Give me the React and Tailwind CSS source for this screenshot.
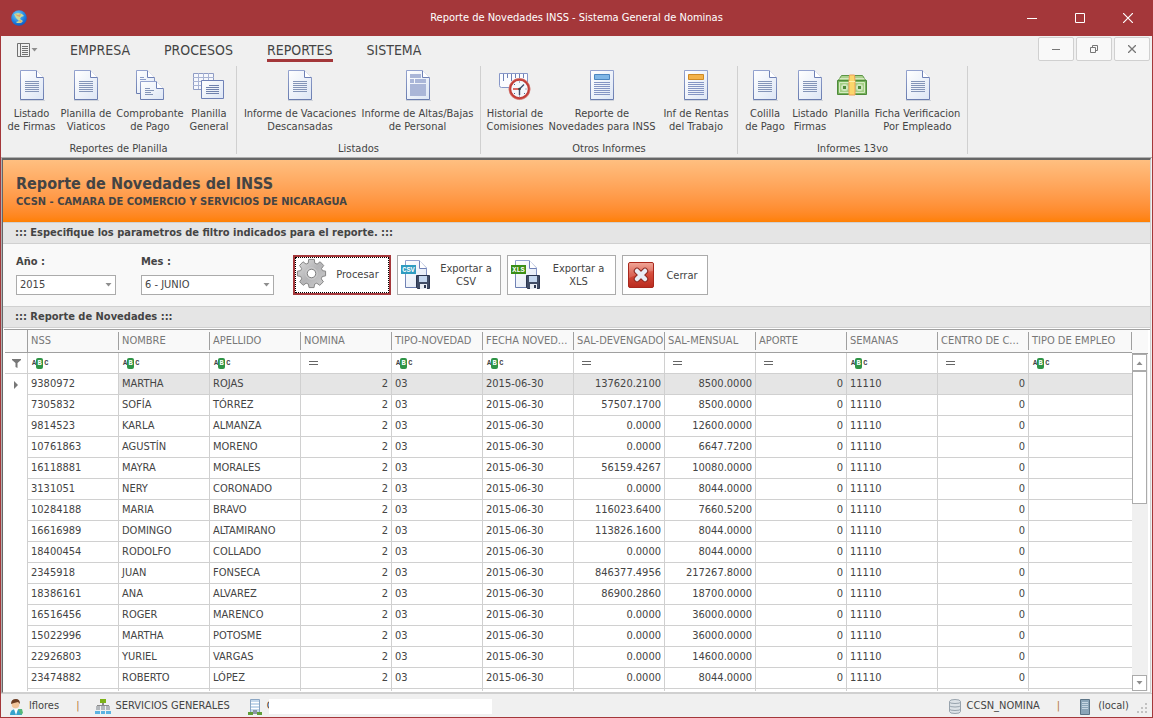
import React from "react";

const rows = [
  ["9380972", "MARTHA", "ROJAS", "137620.2100", "8500.0000"],
  ["7305832", "SOFÍA", "TÓRREZ", "57507.1700", "8500.0000"],
  ["9814523", "KARLA", "ALMANZA", "0.0000", "12600.0000"],
  ["10761863", "AGUSTÍN", "MORENO", "0.0000", "6647.7200"],
  ["16118881", "MAYRA", "MORALES", "56159.4267", "10080.0000"],
  ["3131051", "NERY", "CORONADO", "0.0000", "8044.0000"],
  ["10284188", "MARIA", "BRAVO", "116023.6400", "7660.5200"],
  ["16616989", "DOMINGO", "ALTAMIRANO", "113826.1600", "8044.0000"],
  ["18400454", "RODOLFO", "COLLADO", "0.0000", "8044.0000"],
  ["2345918", "JUAN", "FONSECA", "846377.4956", "217267.8000"],
  ["18386161", "ANA", "ALVAREZ", "86900.2860", "18700.0000"],
  ["16516456", "ROGER", "MARENCO", "0.0000", "36000.0000"],
  ["15022996", "MARTHA", "POTOSME", "0.0000", "36000.0000"],
  ["22926803", "YURIEL", "VARGAS", "0.0000", "14600.0000"],
  ["23474882", "ROBERTO", "LÓPEZ", "0.0000", "8044.0000"],
];

const columns = [
  { name: "NSS", kind: "text" },
  { name: "NOMBRE", kind: "text" },
  { name: "APELLIDO", kind: "text" },
  { name: "NOMINA", kind: "number" },
  { name: "TIPO-NOVEDAD", kind: "text" },
  { name: "FECHA NOVED...", kind: "text" },
  { name: "SAL-DEVENGADO", kind: "number" },
  { name: "SAL-MENSUAL", kind: "number" },
  { name: "APORTE", kind: "number" },
  { name: "SEMANAS", kind: "text" },
  { name: "CENTRO DE C...", kind: "number" },
  { name: "TIPO DE EMPLEO", kind: "text" },
];

/* ---------- icons ---------- */

function IconDefs() {
  return (
    <svg className="absolute h-0 w-0" aria-hidden="true">
      <defs>
        <linearGradient id="paper" x1="0" y1="0" x2="1" y2="1">
          <stop offset="0" stopColor="#ffffff" />
          <stop offset="1" stopColor="#dde6f5" />
        </linearGradient>
        <linearGradient id="edge" x1="0" y1="0" x2="0" y2="1">
          <stop offset="0" stopColor="#94a3cf" />
          <stop offset="1" stopColor="#6a7db0" />
        </linearGradient>
        <linearGradient id="steel" x1="0" y1="0" x2="1" y2="1">
          <stop offset="0" stopColor="#dcdcdc" />
          <stop offset="0.5" stopColor="#b4b4b6" />
          <stop offset="1" stopColor="#cfcfcf" />
        </linearGradient>
        <linearGradient id="danger" x1="0" y1="0" x2="0" y2="1">
          <stop offset="0" stopColor="#ee9585" />
          <stop offset="0.45" stopColor="#d64d3c" />
          <stop offset="1" stopColor="#b92b1f" />
        </linearGradient>
        <radialGradient id="globe" cx="0.4" cy="0.3" r="0.8">
          <stop offset="0" stopColor="#6fd4fb" />
          <stop offset="0.6" stopColor="#1f7fe0" />
          <stop offset="1" stopColor="#0b4db8" />
        </radialGradient>
      </defs>
    </svg>
  );
}

function Icon32({ children }) {
  return (
    <svg width="32" height="32" viewBox="0 0 32 32" aria-hidden="true" className="block shrink-0">
      {children}
    </svg>
  );
}

function Sheet() {
  return (
    <>
      <path d="M4 31.500h25" stroke="#cfd3da" />
      <path d="M4.500 1.500H20L27.500 9V30.500H4.500Z" fill="url(#paper)" stroke="url(#edge)" />
      <path d="M20.500 1.500V8.500H27.500" fill="#fff" stroke="#6f81b6" />
    </>
  );
}

function DocIcon() {
  return (
    <Icon32>
      <Sheet />
      <path d="M9 12.500h14M9 14.500h14M9 16.500h14M9 18.500h14M9 20.500h14M9 22.500h14" stroke="#8495b8" />
    </Icon32>
  );
}

function LayoutDocIcon() {
  return (
    <Icon32>
      <Sheet />
      <path d="M8 5h11v4H8zM8 10h4v4H8zM13 10h11v4H13zM8 15h16v12H8z" fill="#aab6d8" />
    </Icon32>
  );
}

function CopyDocsIcon() {
  return (
    <Icon32>
      <path d="M2.500 1.500H13L20.500 9V24.500H2.500Z" fill="url(#paper)" stroke="url(#edge)" />
      <path d="M13.500 1.500V8.500H20.500" fill="#fff" stroke="#6f81b6" />
      <path d="M6 8.500h4M6 10.500h6" stroke="#8a9cc8" />
      <path d="M6.500 12.500H22L29.500 20V30.500H6.500Z" fill="url(#paper)" stroke="url(#edge)" />
      <path d="M22.500 12.500V19.500H29.500" fill="#fff" stroke="#6f81b6" />
      <path d="M11 19.500h5M11 21.500h9M11 23.500h6M11 25.500h8" stroke="#8495b8" />
    </Icon32>
  );
}

function TableDocIcon() {
  return (
    <Icon32>
      <path d="M.5 4.500h20v16H.5z" fill="#f6f8fd" stroke="#8f9cc4" />
      <path d="M5.500 4v16M10.500 4v16M15.500 4v16M0 8.500h21M0 12.500h21M0 16.500h21" stroke="#a9b4d4" />
      <path d="M8.500 11.500h22v18h-22z" fill="url(#paper)" stroke="#6f81b6" />
      <path d="M16 16.500h10M13 18.500h13M13 20.500h13M13 22.500h13M13 24.500h13" stroke="#7082ad" />
    </Icon32>
  );
}

function ClockIcon() {
  return (
    <Icon32>
      <path d="M.5 4.500h28v12q0 2-2 2H2.500q-2 0-2-2z" fill="#fbfcff" stroke="#8797c8" />
      <path d="M4.500 5v7M8.500 5v4M12.500 5v7M16.500 5v4M20.500 5v4M24.500 5v4" stroke="#6f81b6" />
      <circle cx="20.500" cy="20" r="9.500" fill="#f4f8fc" stroke="#c23f38" strokeWidth="2.500" />
      <circle cx="20.500" cy="20" r="10.600" fill="none" stroke="#dc8a84" strokeWidth=".6" />
      <path d="M20.500 12.500v1M20.500 26.500v1M27.500 20h-1M15 15l1 1M26 25l-1-1M15 25l1-1" stroke="#54648c" />
      <path d="M20.500 20V26M20.500 20L25 15.500" stroke="#41506f" strokeWidth="1.400" />
      <path d="M20.500 20H14" stroke="#cf3d35" strokeWidth="1.500" />
      <circle cx="20.500" cy="20" r="1.300" fill="#344" />
    </Icon32>
  );
}

function HeadedDocIcon({ fill, edge }) {
  return (
    <Icon32>
      <path d="M4 31.500h24" stroke="#cfd3da" />
      <path d="M4.500 1.500h23v29h-23z" fill="url(#paper)" stroke="url(#edge)" />
      <path d="M8.500 5.500h15v5h-15z" fill={fill} stroke={edge} />
      <path d="M8 13.500h16M8 15.500h16M8 17.500h16M8 19.500h16M8 21.500h16M8 23.500h16M8 25.500h16" stroke="#8495c4" />
    </Icon32>
  );
}

function MoneyIcon() {
  return (
    <Icon32>
      <path d="M5.500 6.500h21l4 6H1.500z" fill="#a9d08b" stroke="#5c9546" />
      <path d="M3.500 9.500h25" stroke="#d3e8c0" />
      <path d="M1.500 11.500h29v14h-29z" fill="#77b25c" stroke="#4f8b3b" />
      <path d="M3.500 13.500h25v10h-25z" fill="#a5cf87" stroke="#d5ebc2" />
      <circle cx="8.500" cy="18.500" r="3.500" fill="#cfe6bd" />
      <circle cx="23.500" cy="18.500" r="3.500" fill="#cfe6bd" />
      <path d="M7 17h3v3H7zM22 17h3v3h-3z" fill="#4d8a38" />
      <path d="M13.500 6h5l.5 6v14h-6V12z" fill="#fbd66b" stroke="#ef9f5a" />
      <path d="M13 12.500h6" stroke="#fff0a8" />
    </Icon32>
  );
}

function GearIcon() {
  return (
    <svg width="31" height="31" viewBox="0 0 32 33" aria-hidden="true" className="block shrink-0">
      <path
        d="M13 1.500h6l.5 4 2.500 1 3.200-2.500 3.800 4-2.300 3.200 1 2.300 3.300.5v5l-3.600.7-1 2.500 2.300 3.100-3.900 3.800-3.200-2.300-2.300 1-.6 3.700h-5.300l-.7-3.700-2.400-1-3.200 2.300-3.700-3.800 2.200-3.100-1-2.500-3.600-.7v-5l3.500-.5 1-2.300L3.300 8 7 4l3.200 2.500 2.300-1z"
        fill="url(#steel)"
        stroke="#808080"
        strokeLinejoin="round"
      />
      <circle cx="16" cy="16.500" r="6" fill="none" stroke="#cfcfcf" />
      <circle cx="16" cy="16.500" r="4.500" fill="#fff" stroke="#7b7b7b" />
    </svg>
  );
}

function ExportIcon({ label, color }) {
  return (
    <Icon32>
      <path d="M5.500 1.500H19L26.500 9V28.500H5.500Z" fill="url(#paper)" stroke="url(#edge)" />
      <path d="M19.500 1.500V9.500H26.500" fill="#fff" stroke="#6f81b6" />
      <path d="M16.500 16.500h13v13h-12l-1-1z" fill="#3f4c66" stroke="#2b3650" />
      <path d="M19 17h8v6h-8z" fill="#c3d6ee" />
      <path d="M20 25h7v5h-7z" fill="#e8edf5" />
      <path d="M24 26h2v3h-2z" fill="#2b3650" />
      <path d="M1 6h15v9H1z" fill={color} />
      <text x="8.500" y="13" textAnchor="middle" fontSize="7" fontWeight="700" fill="#fff" fontFamily="Liberation Mono, monospace">
        {label}
      </text>
    </Icon32>
  );
}

function CloseBadgeIcon() {
  return (
    <Icon32>
      <rect x="3.500" y="3.500" width="25" height="25" rx="1.500" fill="url(#danger)" stroke="#a8281d" />
      <path d="M4 4h24v8Q16 13 4 19z" fill="#fff" opacity=".16" />
      <path d="M12 12l8 8M20 12l-8 8" stroke="#8d2a22" strokeWidth="6.500" strokeLinecap="round" />
      <path d="M12 12l8 8M20 12l-8 8" stroke="#e9edf5" strokeWidth="4.500" strokeLinecap="round" />
    </Icon32>
  );
}

function Caret({ up = false }) {
  return (
    <svg width="7" height="4" viewBox="0 0 7 4" aria-hidden="true" className="block">
      <path d={up ? "M.5 4L3.500 .5L6.500 4Z" : "M.5 0H6.500L3.500 3.500Z"} fill="#8e8e8e" />
    </svg>
  );
}

/* ---------- ribbon ---------- */

const headed = {
  blue: <HeadedDocIcon fill="#7fb6e6" edge="#4c86c0" />,
  orange: <HeadedDocIcon fill="#f3b24a" edge="#cf8a24" />,
};

const ribbon = [
  {
    title: "Reportes de Planilla",
    items: [
      { icon: <DocIcon />, lines: ["Listado", "de Firmas"], width: "w-[53px]" },
      { icon: <DocIcon />, lines: ["Planilla de", "Viaticos"], width: "w-14" },
      { icon: <CopyDocsIcon />, lines: ["Comprobante", "de Pago"], width: "w-18" },
      { icon: <TableDocIcon />, lines: ["Planilla", "General"], width: "w-[46px]" },
    ],
  },
  {
    title: "Listados",
    items: [
      { icon: <DocIcon />, lines: ["Informe de Vacaciones", "Descansadas"], width: "w-[118px]" },
      { icon: <LayoutDocIcon />, lines: ["Informe de Altas/Bajas", "de Personal"], width: "w-[117px]" },
    ],
  },
  {
    title: "Otros Informes",
    items: [
      { icon: <ClockIcon />, lines: ["Historial de", "Comisiones"], width: "w-15" },
      { icon: headed.blue, lines: ["Reporte de", "Novedades para INSS"], width: "w-[114px]" },
      { icon: headed.orange, lines: ["Inf de Rentas", "del Trabajo"], width: "w-[74px]" },
    ],
  },
  {
    title: "Informes 13vo",
    items: [
      { icon: <DocIcon />, lines: ["Colilla", "de Pago"], width: "w-[46px]" },
      { icon: <DocIcon />, lines: ["Listado", "Firmas"], width: "w-11" },
      { icon: <MoneyIcon />, lines: ["Planilla"], width: "w-10" },
      { icon: <DocIcon />, lines: ["Ficha Verificacion", "Por Empleado"], width: "w-[91px]" },
    ],
  },
];

function TitleBar() {
  const button = "flex h-9 w-12 items-center justify-center";
  return (
    <header className="grid h-9 shrink-0 grid-cols-[1fr_auto_1fr] items-center bg-[#a4373a] text-white">
      <svg width="16" height="16" viewBox="0 0 16 16" className="ml-[10px]" aria-hidden="true">
        <circle cx="8" cy="8" r="7.800" fill="url(#globe)" />
        <path d="M3 4l4-1 4 1 2 2-3 1-1 2 3 2-2 2H6l-1-1 3-1-3-3z" fill="#c9d89a" />
        <path d="M4 4l3 1 3-1-1 3-3-1zM8 10l3 1-2 2z" fill="#e0a469" />
      </svg>
      <h1>Reporte de Novedades INSS - Sistema General de Nominas</h1>
      <div className="flex justify-end">
        <button type="button" aria-label="Minimizar" className={button}>
          <svg width="10" height="10" viewBox="0 0 10 10"><path d="M0 5.500h10" stroke="#fff" /></svg>
        </button>
        <button type="button" aria-label="Maximizar" className={button}>
          <svg width="10" height="10" viewBox="0 0 10 10"><path d="M.5.5h9v9h-9z" fill="none" stroke="#fff" /></svg>
        </button>
        <button type="button" aria-label="Cerrar ventana" className={button}>
          <svg width="10" height="10" viewBox="0 0 10 10"><path d="M0 0l10 10M10 0L0 10" stroke="#fff" strokeWidth="1.200" /></svg>
        </button>
      </div>
    </header>
  );
}

function RibbonTabs() {
  const child = "flex h-6 w-9 items-center justify-center rounded-xs border border-[#d0d0d0] bg-[#f9f9f9]";
  return (
    <div className="flex h-[29px] items-start">
      <button type="button" aria-label="Menú" className="ml-4 mt-[7px] flex items-center gap-px">
        <svg width="13" height="14" viewBox="0 0 13 14">
          <path d="M.5.5h12v13H.5zM3.500 0v14" fill="none" stroke="#707070" />
          <path d="M5 3.500h6M5 5.500h6M5 7.500h6M5 9.500h6M5 11.500h6" stroke="#707070" />
        </svg>
        <Caret />
      </button>
      <nav className="ml-8 flex grow gap-[34px] text-sm leading-4">
        {["EMPRESA", "PROCESOS", "REPORTES", "SISTEMA"].map((name) => (
          <a
            key={name}
            href="#"
            className={
              name === "REPORTES"
                ? "border-b-3 border-[#a4373a] pt-[6px] pb-px"
                : "border-b-3 border-transparent pt-[6px] pb-px"
            }
          >
            {name}
          </a>
        ))}
      </nav>
      <div className="mt-px mr-[2px] flex gap-[2px]">
        <button type="button" aria-label="Minimizar reporte" className={child}>
          <svg width="8" height="8" viewBox="0 0 8 8"><path d="M0 4.500h8" stroke="#777" /></svg>
        </button>
        <button type="button" aria-label="Restaurar reporte" className={child}>
          <svg width="8" height="8" viewBox="0 0 8 8"><path d="M.5 2.500h5v5h-5zM2.500 2V.5h5v5H6" fill="none" stroke="#777" /></svg>
        </button>
        <button type="button" aria-label="Cerrar reporte" className={child}>
          <svg width="8" height="8" viewBox="0 0 8 8"><path d="M0 0l8 8M8 0L0 8" stroke="#777" strokeWidth="1.300" /></svg>
        </button>
      </div>
    </div>
  );
}

function Ribbon() {
  return (
    <section className="shrink-0 border-b border-[#b0b0b0] bg-[#f0f0f0]">
      <RibbonTabs />
      <div className="flex pt-px pb-[3px]">
        {ribbon.map((group) => (
          <div key={group.title} className="flex flex-col border-r border-[#d0d0d0] px-1">
            <div className="flex h-[77px] items-start pt-[3px]">
              {group.items.map((item) => (
                <button
                  type="button"
                  key={item.lines.join(" ")}
                  className={`flex flex-col items-center gap-[6px] whitespace-nowrap leading-[13px] ${item.width}`}
                >
                  {item.icon}
                  <span>
                    {item.lines.map((line) => (
                      <span key={line} className="block">{line}</span>
                    ))}
                  </span>
                </button>
              ))}
            </div>
            <div className="text-center leading-[11px]">{group.title}</div>
          </div>
        ))}
      </div>
    </section>
  );
}

/* ---------- report ---------- */

function Picker({ id, label, value, width }) {
  return (
    <div className={width}>
      <label htmlFor={id} className="block pb-[7px] font-bold leading-[13px]">{label}</label>
      <div className="relative">
        <select
          id={id}
          defaultValue={value}
          className="block h-5 w-full appearance-none border border-[#ababab] bg-white px-[3px] leading-4 outline-none"
        >
          <option>{value}</option>
        </select>
        <span className="pointer-events-none absolute top-2 right-1"><Caret /></span>
      </div>
    </div>
  );
}

function Filters() {
  const button = "flex h-10 items-center border border-[#ababab] bg-white leading-[13px]";
  return (
    <form className="flex h-[62px] shrink-0 items-start bg-[#f9f9f9] pt-[11px] pl-[13px]">
      <div className="flex gap-[25px]">
        <Picker id="anio" label="Año :" value="2015" width="w-[100px]" />
        <Picker id="mes" label="Mes :" value="6 - JUNIO" width="w-[133px]" />
      </div>
      <div className="ml-[19px] flex gap-[6px]">
        <button type="button" className="flex h-10 w-[98px] border-2 border-[#a4373a] bg-white">
          <span className="flex h-full w-full items-start border border-dotted border-black">
            <GearIcon />
            <span className="grow self-center text-center">Procesar</span>
          </span>
        </button>
        <button type="button" className={`w-[104px] pl-[2px] ${button}`}>
          <ExportIcon label="CSV" color="#2f9cc0" />
          <span className="grow text-center">Exportar a<br />CSV</span>
        </button>
        <button type="button" className={`w-[109px] pl-[2px] ${button}`}>
          <ExportIcon label="XLS" color="#3a8f17" />
          <span className="grow text-center">Exportar a<br />XLS</span>
        </button>
        <button type="button" className={`w-[86px] pl-[2px] ${button}`}>
          <CloseBadgeIcon />
          <span className="grow text-center">Cerrar</span>
        </button>
      </div>
    </form>
  );
}

function FilterMark({ kind }) {
  if (kind === "number") {
    return (
      <svg width="9" height="4" viewBox="0 0 9 4" className="ml-[5px] block" aria-hidden="true">
        <path d="M0 .5h9M0 3.500h9" stroke="#666" />
      </svg>
    );
  }
  return (
    <span className="ml-px flex items-center font-['Liberation_Mono',monospace] text-[7px] leading-[11px] font-bold">
      <span>A</span>
      <span className="flex h-[11px] w-[7px] justify-center rounded-xs bg-[#2f9446] text-white">B</span>
      <span className="pl-px">C</span>
    </span>
  );
}

function Grid() {
  const cell = "h-[21px] truncate border-r border-b border-[#d0d0d0] p-0 px-[3px]";
  return (
    <div className="mt-px ml-px flex min-h-0 flex-1 border-t border-[#a0a0a0] pl-px">
      <div className="min-w-0 grow overflow-hidden">
        <table className="w-full table-fixed border-separate border-spacing-0 leading-4">
          <colgroup>
            <col className="w-[23px]" />
            {columns.map((column, i) => (
              <col key={column.name} className={i < columns.length - 1 ? "w-[91px]" : undefined} />
            ))}
          </colgroup>
          <thead>
            <tr className="bg-[#f9f9f9] text-left text-[#777]">
              <th aria-label="Indicador" className="h-[23px] border-r border-b border-[#a0a0a0] p-0" />
              {columns.map((column) => (
                <th key={column.name} scope="col" className="h-[23px] border-b border-[#a0a0a0] p-0 font-normal">
                  <div className="border-r border-[#a0a0a0] py-px pl-[3px] whitespace-nowrap">{column.name}</div>
                </th>
              ))}
            </tr>
            <tr>
              <td className="h-[21px] border-r border-b border-[#d0d0d0] p-0">
                <svg width="9" height="9" viewBox="0 0 9 9" className="mx-auto block" aria-hidden="true">
                  <path d="M0 0h9v1L5.500 4v5l-2-1V4L0 1z" fill="#777" />
                </svg>
              </td>
              {columns.map((column) => (
                <td key={column.name} className={`${cell} last:border-r-0`}>
                  <FilterMark kind={column.kind} />
                </td>
              ))}
            </tr>
          </thead>
          <tbody>
            {rows.map(([nss, nombre, apellido, devengado, mensual], i) => {
              const shade = i === 0 ? "bg-[#e5e5e5]" : "";
              return (
                <tr key={nss}>
                  <td className="h-[21px] border-r border-[#d0d0d0] p-0">
                    {i === 0 && (
                      <svg width="4" height="8" viewBox="0 0 4 8" className="mx-auto block" aria-hidden="true">
                        <path d="M0 0L4 4L0 8Z" fill="#777" />
                      </svg>
                    )}
                  </td>
                  <td className={cell}>{nss}</td>
                  <td className={`${cell} ${shade}`}>{nombre}</td>
                  <td className={`${cell} ${shade}`}>{apellido}</td>
                  <td className={`${cell} ${shade} text-right`}>2</td>
                  <td className={`${cell} ${shade}`}>03</td>
                  <td className={`${cell} ${shade}`}>2015-06-30</td>
                  <td className={`${cell} ${shade} text-right`}>{devengado}</td>
                  <td className={`${cell} ${shade} text-right`}>{mensual}</td>
                  <td className={`${cell} ${shade} text-right`}>0</td>
                  <td className={`${cell} ${shade}`}>11110</td>
                  <td className={`${cell} ${shade} text-right`}>0</td>
                  <td className={`${cell} ${shade} border-r-0`} />
                </tr>
              );
            })}
            <tr>
              <td className="h-[21px] border-r border-[#d0d0d0] p-0" />
              {columns.map((column) => (
                <td key={column.name} className={`${cell} last:border-r-0`} />
              ))}
            </tr>
          </tbody>
        </table>
      </div>
      <div className="flex w-4 shrink-0 flex-col bg-[#f0f0f0]">
        <div className="h-6 shrink-0 border-b border-[#a0a0a0] bg-[#f9f9f9]" />
        <button type="button" aria-label="Subir" className="flex h-[17px] w-[15px] shrink-0 items-center justify-center border border-[#ababab] bg-white">
          <Caret up />
        </button>
        <div className="h-[133px] w-[15px] shrink-0 border border-[#ababab] bg-white" />
        <div className="grow" />
        <button type="button" aria-label="Bajar" className="flex h-4 w-[15px] shrink-0 items-center justify-center border border-[#ababab] bg-white">
          <Caret />
        </button>
      </div>
      <div className="w-[2px] shrink-0 bg-white" />
    </div>
  );
}

function StatusBar() {
  return (
    <footer className="flex h-6 shrink-0 items-center border-t border-[#d0d0d0] bg-[#f0f0f0] pt-[2px]">
      <svg width="14" height="16" viewBox="0 0 14 16" className="ml-[9px]" aria-hidden="true">
        <path d="M0 16q0-6 6-6t6 6z" fill="#36a3cc" />
        <path d="M4 10l2 6 2-6z" fill="#fff" />
        <circle cx="5.500" cy="5.500" r="3.800" fill="#f2c49a" />
        <path d="M1 5q0-5 5-5 4 0 4 5L8 3 4 4z" fill="#6b3c22" />
        <path d="M8 10h4l1 4-2 2z" fill="#55b878" />
      </svg>
      <span className="ml-[5px]">lflores</span>
      <span className="ml-[17px] text-[#b5763a]">|</span>
      <svg width="16" height="16" viewBox="0 0 16 16" className="ml-4" aria-hidden="true">
        <path d="M5 0h6v4H5z" fill="#7db317" />
        <path d="M7 4h2v2H7zM2 6h12v1H2z" fill="#8a8a8a" />
        <path d="M1 7h4v4H1zM6 7h4v4H6zM11 7h4v4h-4z" fill="#b4b8bc" />
        <path d="M0 12h5v3H0zM6 12h4v3H6zM11 12h5v3h-5z" fill="#5cb3e2" />
      </svg>
      <span className="ml-1">SERVICIOS GENERALES</span>
      <svg width="14" height="16" viewBox="0 0 14 16" className="ml-[18px]" aria-hidden="true">
        <path d="M2.500.5h9v13h-9z" fill="#c5d9ec" stroke="#8ba6c3" />
        <path d="M3 3.500h8M3 6.500h8M3 9.500h8" stroke="#fff" />
        <path d="M5 11h4v4H5z" fill="#8c98a6" />
        <path d="M0 13h5v3H0zM9 13h5v3H9z" fill="#5f9c39" />
      </svg>
      <span className="ml-[5px]">C</span>
      <span className="relative -ml-[5px] h-[15px] w-[223px] bg-white" />
      <span className="grow" />
      <svg width="12" height="15" viewBox="0 0 12 15" aria-hidden="true">
        <path d="M.5 2.500v10q0 2 5.500 2t5.500-2v-10q0-2-5.500-2t-5.500 2z" fill="#dde2e7" stroke="#98a3ad" />
        <path d="M.5 3q0 1.500 5.500 1.500T11.500 3M.5 6.500q0 1.500 5.500 1.500t5.500-1.500M.5 10q0 1.500 5.500 1.500T11.500 10" fill="none" stroke="#98a3ad" />
      </svg>
      <span className="ml-[6px]">CCSN_NOMINA</span>
      <span className="ml-[17px] text-[#b5763a]">|</span>
      <svg width="10" height="16" viewBox="0 0 10 16" className="ml-5" aria-hidden="true">
        <path d="M.5.5h9v15h-9z" fill="#8ba5b8" stroke="#5c7486" />
        <path d="M2 3.500h6M2 5.500h6M2 7.500h6M2 9.500h6" stroke="#c6d6e2" />
      </svg>
      <span className="ml-2">(local)</span>
      <svg width="11" height="11" viewBox="0 0 11 11" className="mt-1 mr-1 ml-2" aria-hidden="true">
        <path d="M8 0h2v2H8zM4 4h2v2H4zM8 4h2v2H8zM0 8h2v2H0zM4 8h2v2H4zM8 8h2v2H8z" fill="#c2c2c2" />
      </svg>
    </footer>
  );
}

export default function App() {
  const strip = "shrink-0 border-y border-[#d0d0d0] bg-[#e5e5e5] pl-3 font-bold leading-5";
  return (
    <div className="flex h-screen flex-col overflow-hidden border-x border-b border-[#a4373a] bg-[#f0f0f0] font-['DejaVu_Sans_Condensed','DejaVu_Sans',sans-serif] text-[11px] text-[#444]">
      <IconDefs />
      <TitleBar />
      <Ribbon />
      <main className="flex min-h-0 flex-1 flex-col border-l border-[#b0b0b0] pr-px">
        <div className="flex min-h-0 flex-1 flex-col border-t-2 border-r border-b border-l border-[#666] border-r-[#d0d0d0] border-b-[#d0d0d0] bg-white pb-px">
          <div className="shrink-0 bg-linear-to-b from-[#ffbf80] to-[#ff8000] px-[13px] pt-[14px] pb-[13px] font-bold">
            <h2 className="text-base leading-5">Reporte de Novedades del INSS</h2>
            <p className="leading-[15px]">CCSN - CAMARA DE COMERCIO Y SERVICIOS DE NICARAGUA</p>
          </div>
          <div className={strip}>::: Especifique los parametros de filtro indicados para el reporte. :::</div>
          <Filters />
          <div className={strip}>::: Reporte de Novedades :::</div>
          <Grid />
        </div>
      </main>
      <StatusBar />
    </div>
  );
}
